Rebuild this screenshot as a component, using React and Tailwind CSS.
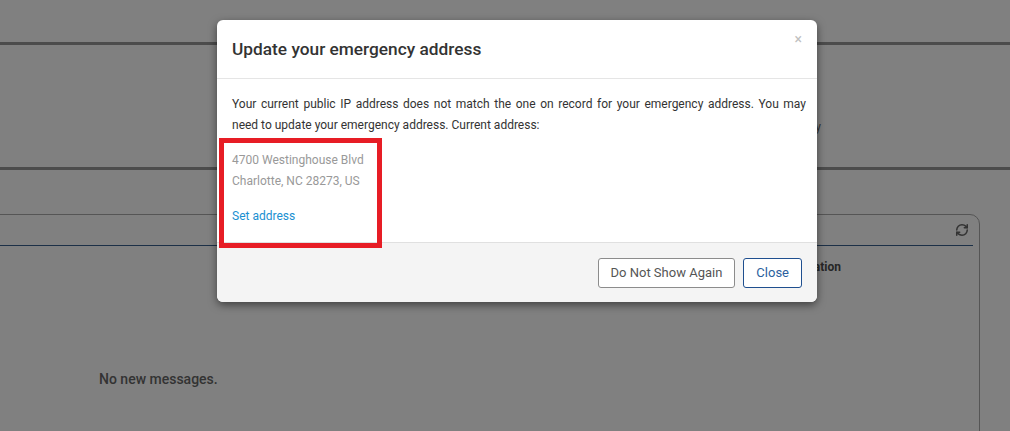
import { RefreshCw } from 'lucide-react'

const font = { fontFamily: 'Roboto, "Liberation Sans", sans-serif' }

export default function App() {
  return (
    <div className="relative w-full h-[431px] overflow-hidden bg-[#808080]" style={font}>
      {/* page behind the overlay */}
      <div className="h-[42px]" />
      <div className="h-[128px] border-y-[3px] border-[#4c4c4c] flex items-start justify-end pr-[189px] pt-[73px]">
        <span className="text-[12px] text-[#333]">Availability</span>
      </div>
      <div className="h-[44px]" />
      <div className="ml-[-10px] w-[990px] h-[240px] border border-[#555] rounded-tr-[10px]">
        <div className="mr-[6px] h-[31px] border-b border-[#1c3047] flex items-center justify-end pr-[4px]">
          <RefreshCw size={14} strokeWidth={2.6} className="text-[#333]" />
        </div>
        <div className="flex justify-end pr-[138px] pt-[12px]">
          <span className="text-[12px] font-bold text-[#262626]">Location</span>
        </div>
        <div className="pl-[108px] pt-[93px] text-[14px] font-medium text-[#333]">No new messages.</div>
      </div>

      {/* modal */}
      <div className="absolute left-[217px] top-[20px] w-[600px] bg-white rounded-[6px] shadow-[0_3px_9px_rgba(0,0,0,0.5)] overflow-hidden">
        <div className="h-[59px] border-b border-[#e5e5e5] flex items-center justify-between pl-[15px] pr-[15px]">
          <h2 className="text-[17.3px] font-medium text-[#333] leading-none mt-[1px]">Update your emergency address</h2>
          <span className="text-[14px] text-[#c0c0c0] self-start mt-[12px] leading-none">×</span>
        </div>
        <div className="pl-[15px] pr-[11px] pt-[15px] pb-[15px] text-[12px] leading-[21px]">
          <p className="text-[#333] text-justify">
            Your current public IP address does not match the one on record for your emergency address. You may need to update your emergency address. Current address:
          </p>
          <p className="mt-[14px] text-[#999]">4700 Westinghouse Blvd</p>
          <p className="text-[#999]">Charlotte, NC 28273, US</p>
          <a className="block mt-[14px] text-[#1a8fd1]">Set address</a>
        </div>
        <div className="h-[60px] bg-[#f4f4f4] border-t border-[#e0e0e0] flex items-center justify-end gap-[8px] pr-[15px]">
          <button className="h-[30px] px-[12px] border border-[#8c8c8c] rounded-[3px] bg-white text-[13px] text-[#555]">Do Not Show Again</button>
          <button className="h-[30px] px-[12px] border border-[#1f4f8f] rounded-[3px] bg-white text-[13px] text-[#2c5f9e]">Close</button>
        </div>
      </div>

      {/* annotation box */}
      <div className="absolute left-[219px] top-[138px] w-[163px] h-[110px] border-[5px] border-[#e71d25]" />
    </div>
  )
}
